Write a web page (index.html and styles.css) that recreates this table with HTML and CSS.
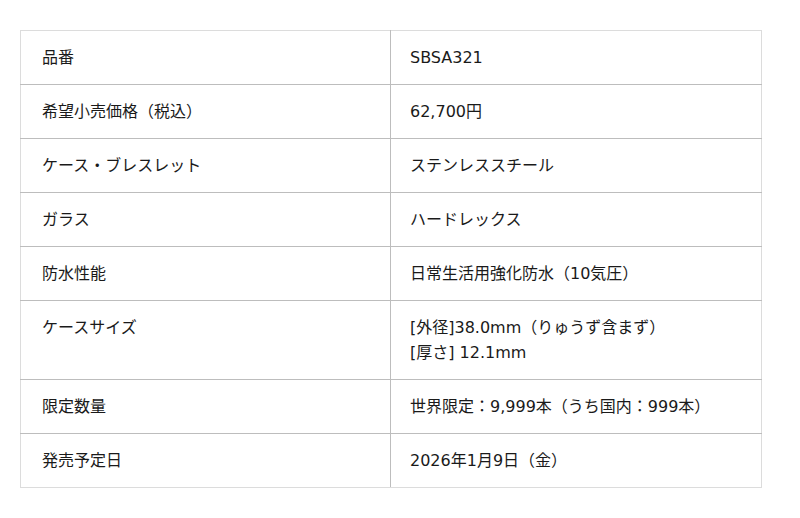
FILE: index.html
```html
<!DOCTYPE html>
<html lang="ja">
<head>
<meta charset="utf-8">
<link rel="stylesheet" href="styles.css">
</head>
<body>
<div class="wrap">
<table class="spec">
<tr><th>品番</th><td>SBSA321</td></tr>
<tr><th>希望小売価格（税込）</th><td>62,700円</td></tr>
<tr><th>ケース・ブレスレット</th><td>ステンレススチール</td></tr>
<tr><th>ガラス</th><td>ハードレックス</td></tr>
<tr><th>防水性能</th><td>日常生活用強化防水（10気圧）</td></tr>
<tr><th>ケースサイズ</th><td>[外径]38.0mm（りゅうず含まず）<br>[厚さ] 12.1mm</td></tr>
<tr><th>限定数量</th><td>世界限定：9,999本（うち国内：999本）</td></tr>
<tr><th>発売予定日</th><td>2026年1月9日（金）</td></tr>
</table>
</div>
</body>
</html>
```
FILE: styles.css
```css
html, body {
  margin: 0;
  padding: 0;
  background: #fff;
}
body {
  font-family: "DejaVu Sans", "Noto Sans CJK JP", sans-serif;
  font-size: 16px;
  color: #1a1a1a;
}
.wrap {
  padding: 30px 38px 0 20px;
}
.spec {
  width: 742px;
  border-collapse: collapse;
  border: 1px solid #dcdcdc;
  table-layout: fixed;
}
.spec th, .spec td {
  text-align: left;
  font-weight: normal;
  vertical-align: top;
  padding: 14px 20px 14px 21px;
  line-height: 25px;
  border-bottom: 1px solid #bdbdbd;
}
.spec td {
  padding-left: 19px;
}
.spec tr:last-child th, .spec tr:last-child td {
  border-bottom: 1px solid #dcdcdc;
}
.spec th {
  width: 328px;
  border-right: 1px solid #bdbdbd;
}
```
